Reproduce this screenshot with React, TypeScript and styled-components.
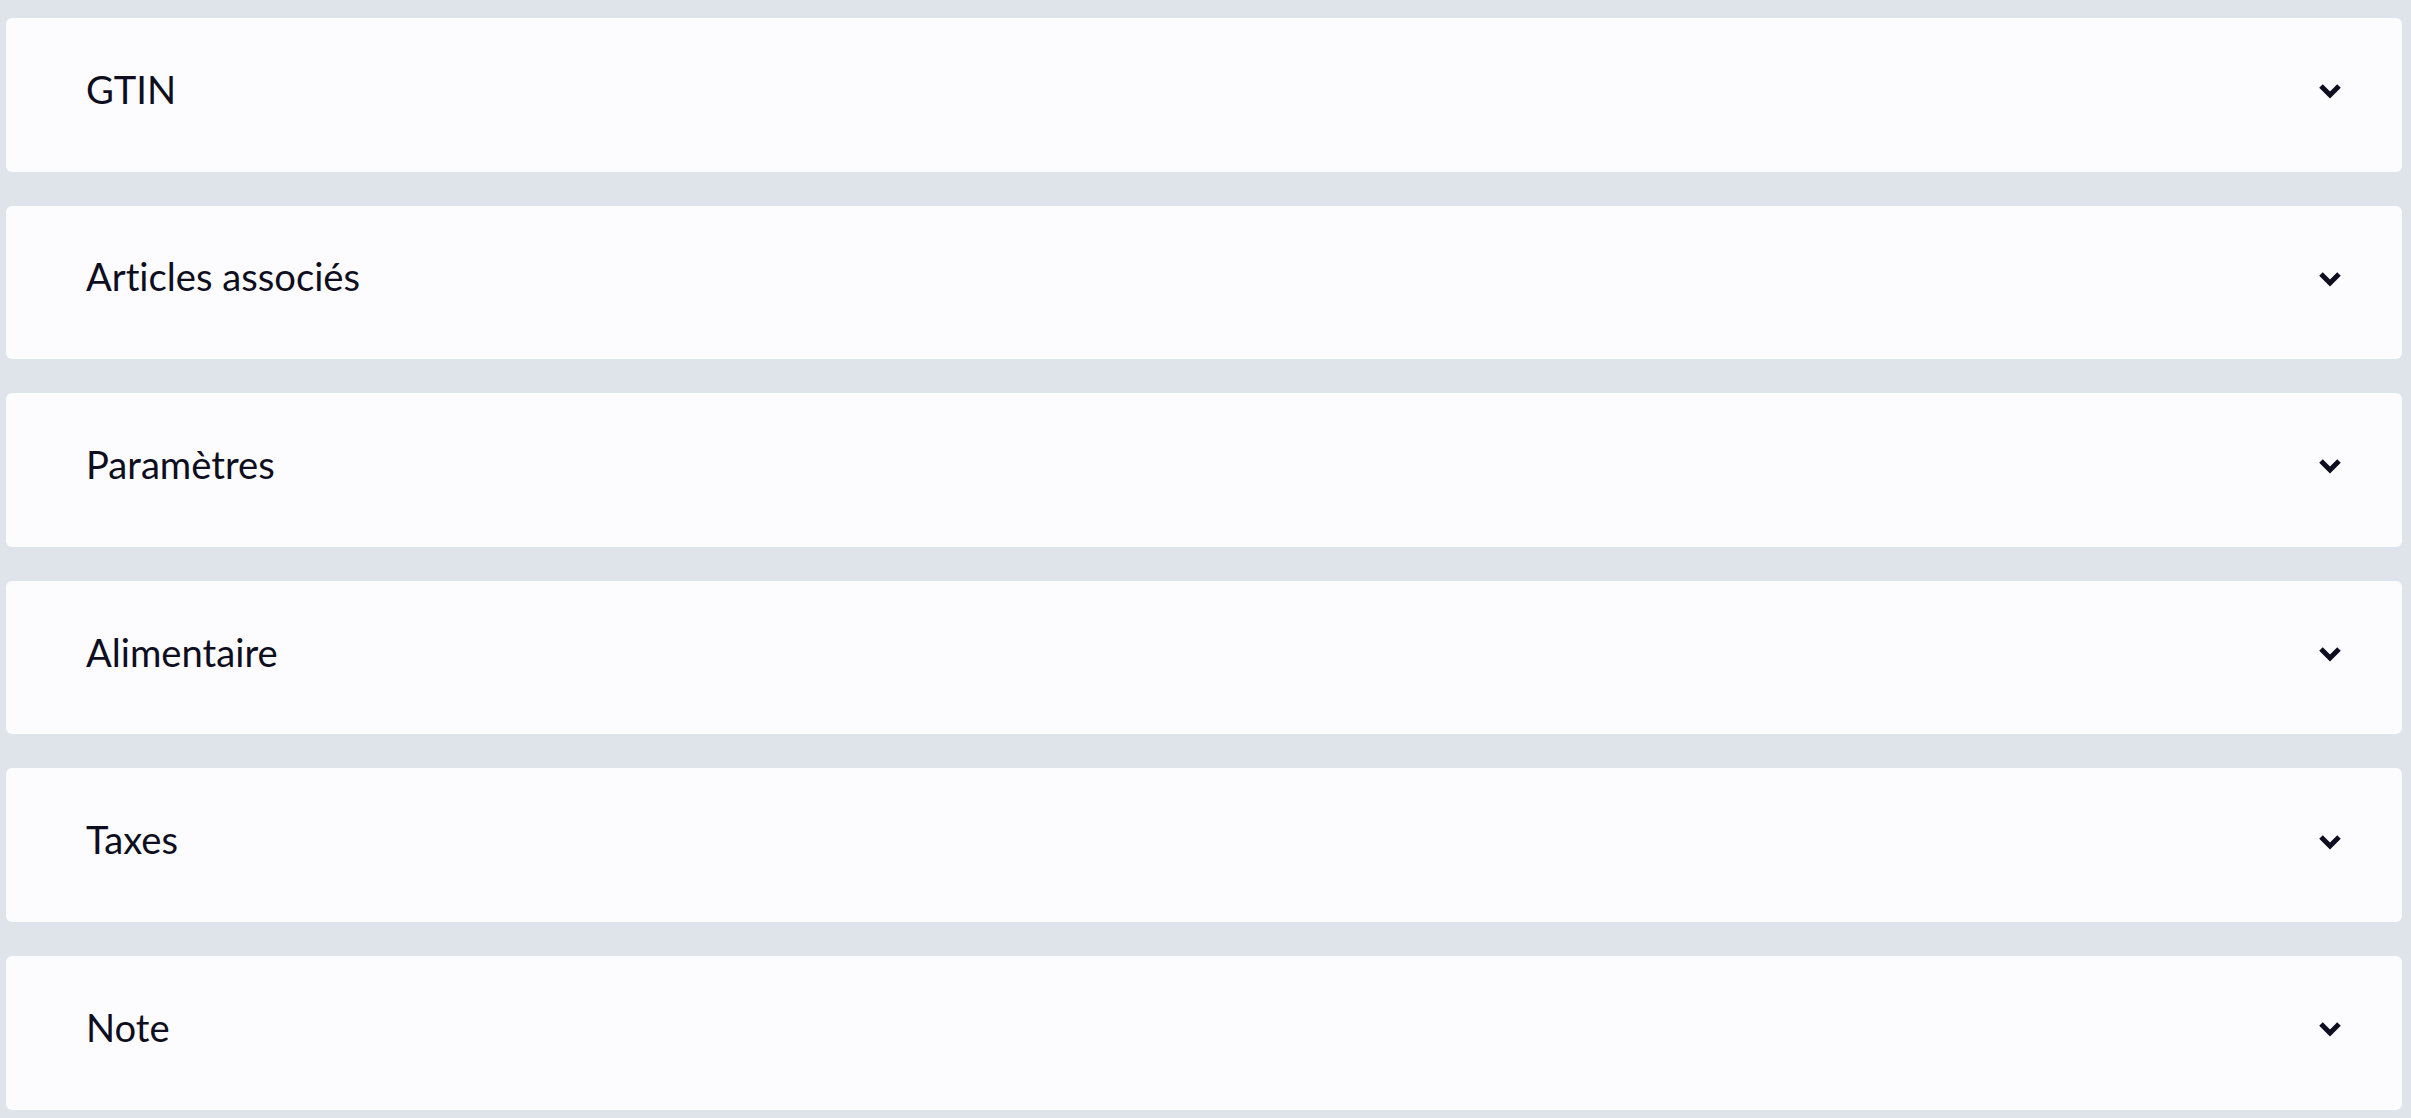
import { FunctionComponent } from "react";
import styled, { createGlobalStyle } from "styled-components";

const GlobalStyle = createGlobalStyle`
  html, body {
    margin: 0;
    padding: 0;
    background: #dee4e9;
    font-family: Lato, "Noto Sans", sans-serif;
  }
`;

const Page = styled.div`
  display: flex;
  flex-flow: column nowrap;
  gap: 34px;
  padding: 18px 9px 0 6px;
`;

const Card = styled.section`
  background: #fcfcfe;
  border-radius: 6px;
  height: 153.6px;
  box-sizing: border-box;
  display: flex;
  flex-flow: column nowrap;
`;

const Header = styled.button`
  flex: 1;
  display: flex;
  justify-content: space-between;
  align-items: center;
  padding: 0 60px 12px 80px;
  background: transparent;
  border: none;
  font: inherit;
  cursor: pointer;
`;

const Title = styled.h2`
  margin: 0;
  font-size: 38.2px;
  font-weight: 400;
  font-variant-ligatures: none;
  color: #0e0e20;
`;

const ChevronIcon = styled.svg`
  margin-top: 5px;
  flex: 0 0 auto;
`;

const Chevron: FunctionComponent = () => (
  <ChevronIcon width="24" height="16" viewBox="0 0 24 16">
    <polyline
      points="3,3 12,12 21,3"
      fill="none"
      stroke="#0e0e20"
      strokeWidth="5"
      strokeLinejoin="miter"
    />
  </ChevronIcon>
);

const sections = [
  "GTIN",
  "Articles associés",
  "Paramètres",
  "Alimentaire",
  "Taxes",
  "Note",
];

const App: FunctionComponent = () => (
  <>
    <GlobalStyle />
    <Page>
      {sections.map((s) => (
        <Card key={s}>
          <Header>
            <Title>{s}</Title>
            <Chevron />
          </Header>
        </Card>
      ))}
    </Page>
  </>
);

export default App;
